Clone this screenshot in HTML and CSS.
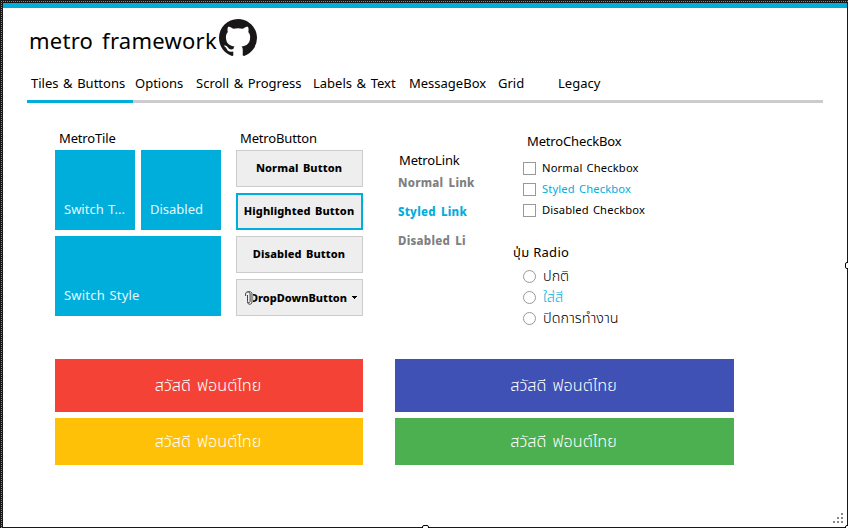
FILE: index.html
```
<!DOCTYPE html>
<html lang="th">
<head>
<meta charset="utf-8">
<title>metro framework</title>
<link rel="stylesheet" href="styles.css">
</head>
<body>
<main class="window">
  <div class="accent"></div>
  <header class="header">
    <h1 class="title">metro framework</h1>
    <svg class="logo" viewBox="0 0 16 16"><path fill="#191717" d="M8 0C3.58 0 0 3.58 0 8c0 3.54 2.29 6.53 5.47 7.59.4.07.55-.17.55-.38 0-.19-.01-.82-.01-1.49-2.01.37-2.53-.49-2.69-.94-.09-.23-.48-.94-.82-1.13-.28-.15-.68-.52-.01-.53.63-.01 1.08.58 1.23.82.72 1.21 1.87.87 2.33.66.07-.52.28-.87.51-1.07-1.78-.2-3.64-.89-3.64-3.95 0-.87.31-1.59.82-2.15-.08-.2-.36-1.02.08-2.12 0 0 .67-.21 2.2.82.64-.18 1.32-.27 2-.27s1.36.09 2 .27c1.53-1.04 2.2-.82 2.2-.82.44 1.1.16 1.92.08 2.12.51.56.82 1.27.82 2.15 0 3.07-1.87 3.75-3.65 3.95.29.25.54.73.54 1.48 0 1.07-.01 1.93-.01 2.2 0 .21.15.46.55.38A8.01 8.01 0 0 0 16 8c0-4.42-3.58-8-8-8z"/></svg>
  </header>
  <nav class="tabs">
    <span class="tab active">Tiles &amp; Buttons</span><span class="tab">Options</span><span class="tab">Scroll &amp; Progress</span><span class="tab">Labels &amp; Text</span><span class="tab">MessageBox</span><span class="tab">Grid</span><span class="tab">Legacy</span>
  </nav>
  <section class="controls">
    <div class="tile-group">
      <h2 class="label">MetroTile</h2>
      <div class="tiles">
        <div class="tile"><span>Switch T...</span></div>
        <div class="tile"><span>Disabled</span></div>
        <div class="tile wide"><span>Switch Style</span></div>
      </div>
    </div>
    <div class="button-group">
      <h2 class="label">MetroButton</h2>
      <div class="buttons">
        <div class="button">Normal Button</div>
        <div class="button highlighted">Highlighted Button</div>
        <div class="button">Disabled Button</div>
        <div class="button dropdown">
          <svg class="clip" viewBox="0 0 8 14"><path d="M2.5 4v6.2c0 2 2.6 2 2.6 0V3c0-3-4.5-3-4.5 0v2M7 3v8c0 3-4.5 3-4.5 0M2.5 1.2C4 .2 7 .4 7 3" fill="none" stroke="#444"/></svg>
          <span class="cut"><span>DropDownButton</span></span>
          <svg class="caret" viewBox="0 0 5 3" shape-rendering="crispEdges"><path d="M0 0h5v1H4v1H3v1H2V2H1V1H0z"/></svg>
        </div>
      </div>
    </div>
    <div class="link-group">
      <h2 class="label">MetroLink</h2>
      <span class="link">Normal Link</span>
      <span class="link styled">Styled Link</span>
      <span class="link">Disabled Li</span>
    </div>
    <div class="choice-group">
      <h2 class="label check-label">MetroCheckBox</h2>
      <div class="choice"><i class="box"></i><span>Normal Checkbox</span></div>
      <div class="choice styled"><i class="box"></i><span>Styled Checkbox</span></div>
      <div class="choice"><i class="box"></i><span>Disabled Checkbox</span></div>
      <h2 class="label radio-label">ปุ่ม Radio</h2>
      <div class="choice thai"><i class="box round"></i><span>ปกติ</span></div>
      <div class="choice thai styled"><i class="box round"></i><span>ใส่สี</span></div>
      <div class="choice thai"><i class="box round"></i><span>ปิดการทำงาน</span></div>
    </div>
  </section>
  <section class="banners">
    <div class="banner red">สวัสดี ฟอนต์ไทย</div>
    <div class="banner indigo">สวัสดี ฟอนต์ไทย</div>
    <div class="banner amber">สวัสดี ฟอนต์ไทย</div>
    <div class="banner green">สวัสดี ฟอนต์ไทย</div>
  </section>
  <svg class="grip" viewBox="0 0 10 10" shape-rendering="crispEdges"><path fill="#888" d="M8 0h2v2H8zM4 4h2v2H4zM8 4h2v2H8zM0 8h2v2H0zM4 8h2v2H4zM8 8h2v2H8z"/></svg>
  <i class="edge top"></i>
  <i class="edge left"></i>
  <i class="handle right"></i>
  <i class="handle bottom"></i>
  <i class="handle corner"></i>
</main>
</body>
</html>
```
FILE: styles.css
```
* { box-sizing: border-box; }
html { overflow: hidden; }
body { margin: 0; }
.window {
  position: relative;
  width: 848px;
  height: 528px;
  background: #fff;
  border: solid #191717;
  border-width: 3px 1px 1px 3px;
  font-family: "Noto Sans", "Noto Sans Thai", sans-serif;
  font-size: 13px;
  color: #000;
}
h1, h2 { margin: 0; font-weight: 400; }
.accent { height: 5px; background: #00aedb; }
.header { display: flex; height: 56px; padding: 11px 0 0 26px; }
.title {
  width: 190px;
  font-size: 22px;
  line-height: 43px;
  letter-spacing: .25px;
  word-spacing: 3px;
  white-space: nowrap;
}
.logo { width: 38px; height: 38px; }
.tabs {
  display: grid;
  grid-template-columns: 106px 59px 117px 96px 89px 60px 269px;
  width: 796px;
  height: 39px;
  margin-left: 24px;
}
.tab {
  height: 39px;
  border-bottom: 3px solid #ccc;
  padding-left: 4px;
  line-height: 39px;
  white-space: nowrap;
  word-spacing: 1.2px;
}
.tab:nth-child(2) { padding-left: 2px; }
.tab.active { border-color: #00aedb; }
.controls { display: flex; height: 256px; padding: 26px 0 0 52px; }
.label { font-size: 13px; line-height: 18px; letter-spacing: -.15px; padding-left: 4px; white-space: nowrap; }
.tile-group { width: 166px; }
.tiles { display: grid; grid-template-columns: 80px 80px; gap: 6px; margin-top: 3px; }
.tile {
  display: flex;
  align-items: flex-end;
  height: 80px;
  padding: 0 0 12px 9px;
  background: #00aedb;
  color: #e6f7fb;
  line-height: 18px;
  word-spacing: 1px;
  white-space: nowrap;
}
.wide { grid-column: span 2; letter-spacing: .2px; }
.button-group { width: 127px; margin-left: 15px; }
.buttons { display: grid; gap: 6px; margin-top: 3px; }
.button {
  display: flex;
  align-items: center;
  justify-content: center;
  height: 37px;
  padding: 0 1px 2px 0;
  background: #eee;
  border: 1px solid #ccc;
  font-size: 11px;
  font-weight: 800;
  letter-spacing: .1px;
  word-spacing: 1.5px;
  white-space: nowrap;
}
.highlighted { border: 2px solid #00aedb; }
.dropdown { justify-content: flex-start; padding: 0 0 0 8px; letter-spacing: 0; }
.clip { width: 8px; height: 14px; flex: none; }
.cut { width: 94px; overflow: hidden; display: flex; justify-content: flex-end; }
.caret { width: 5px; height: 3px; margin-left: 5px; }
.link-group { display: flex; flex-direction: column; margin-left: 35px; padding-top: 22px; width: 115px; }
.link-group .label { padding-left: 1px; }
.link { height: 29px; line-height: 27px; font-size: 11.5px; font-weight: 800; letter-spacing: .25px; word-spacing: 2px; color: #808080; }
.link.styled { color: #00aedb; }
.choice-group { padding-top: 3px; }
.check-label { padding-left: 14px; margin-bottom: 8px; }
.radio-label { padding-left: 0; margin: 22px 0 5px; letter-spacing: .3px; }
.choice { display: flex; align-items: center; height: 21px; padding-left: 10px; font-size: 11.2px; letter-spacing: .15px; word-spacing: 1px; white-space: nowrap; }
.choice span { margin-top: -2px; }
.choice.styled { color: #00aedb; }
.choice.thai { font-size: 14.4px; font-weight: 300; letter-spacing: 0; }
.choice.thai span { margin-top: 0; }
.box { width: 13px; height: 13px; margin-right: 6px; border: 1px solid #999; background: #fff; }
.round { border-radius: 50%; margin-right: 7px; }
.banners {
  display: grid;
  grid-template-columns: 308px 339px;
  grid-template-rows: 53px 47px;
  gap: 6px 32px;
  padding-left: 52px;
}
.banner { display: flex; align-items: center; justify-content: center; padding-right: 2px; color: #fff; font-size: 16.2px; font-weight: 300; word-spacing: 2px; }
.red { background: #f44336; }
.indigo { background: #3f51b5; }
.amber { background: #ffc107; }
.green { background: #4caf50; }
.grip { position: absolute; right: 4px; bottom: 4px; width: 10px; height: 10px; }
.handle { position: absolute; width: 7px; height: 7px; border: 1px solid #000; border-radius: 2px; background: #fff; }
.right { left: 842px; top: 259px; }
.bottom { left: 419px; top: 522px; }
.corner { left: 842px; top: 522px; }
.edge { position: absolute; }
.edge.top { top: -2px; left: -2px; width: 847px; height: 1px; background: repeating-linear-gradient(90deg, #888 0 1px, #191717 1px 2px); }
.edge.left { left: -2px; top: -2px; width: 1px; height: 527px; background: repeating-linear-gradient(#888 0 1px, #191717 1px 2px); }
```
